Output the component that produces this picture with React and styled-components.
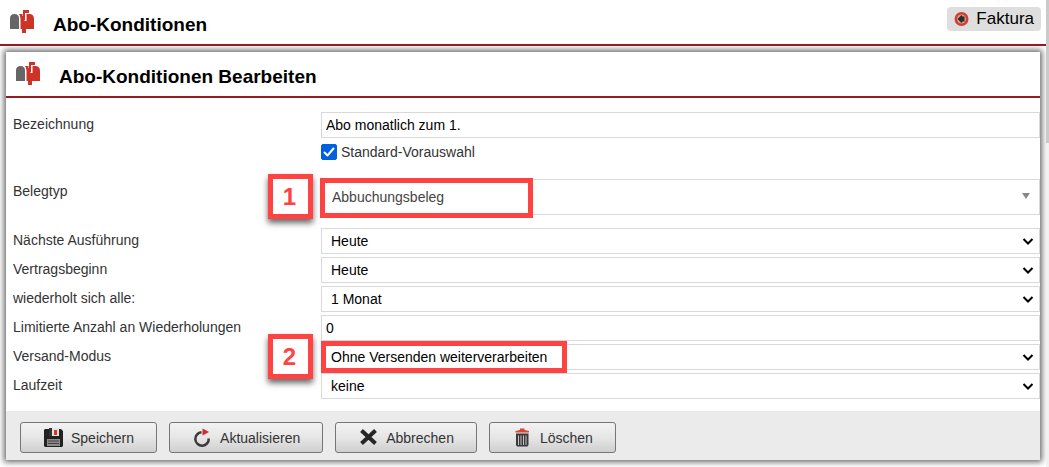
import React from "react";
import styled, { createGlobalStyle } from "styled-components";

const RED = "#921c20";
const MARK = "#ff4242";

const GlobalStyle = createGlobalStyle`
  *, *::before, *::after { box-sizing: border-box; }
  body {
    margin: 0;
    background: #fff;
    color: #333;
    font: 14px/24px "Liberation Sans", Arial, sans-serif;
  }
`;

const Page = styled.div`
  display: flex;
  min-height: 100vh;
`;

const Main = styled.main`
  flex: 1;
  min-width: 0;
`;

const ScrollTrack = styled.div`
  flex: none;
  width: 3px;
  background: #f1f1f1;
`;

const ScrollThumb = styled.div`
  height: 143px;
  background: #cacaca;
`;

const TitleBar = styled.header`
  display: flex;
  align-items: flex-start;
  gap: 19px;
  height: 46px;
  padding: 7px 5px 0 10px;
  border-bottom: 2px solid ${RED};
`;

const TitleIcon = styled.svg`
  flex: none;
  width: 24px;
  height: 28px;
`;

const Title = styled.h1`
  flex: 1;
  margin: 0;
  padding-top: 6px;
  color: #000;
  font-size: 19px;
  line-height: 24px;
`;

const ModuleLink = styled.a`
  display: flex;
  align-items: center;
  gap: 7px;
  height: 24px;
  padding: 0 7px;
  border-radius: 4px;
  background: #dedede;
  color: #000;
  font-size: 17px;
  text-decoration: none;
`;

const Panel = styled.form`
  margin: 6px 6px 7px;
  background: #fff;
  box-shadow: 0 0 6px 2px #666;
`;

const Fields = styled.div`
  display: flex;
  flex-direction: column;
  gap: 3px;
  padding: 14px 0 12px 7px;
`;

const Row = styled.div`
  display: grid;
  grid-template-columns: 308px minmax(0, 1fr);
  margin-bottom: ${(p) => (p.$spaced ? "10px" : "0")};
`;

const Control = styled.div`
  position: relative;
  display: flex;
`;

const Input = styled.input`
  width: 100%;
  height: 26px;
  padding: 0 4px;
  border: 1px solid #d9d9d9;
  border-radius: 0;
  background: #fff;
  color: #000;
  font: inherit;
`;

const Select = styled.select`
  appearance: none;
  width: 100%;
  height: ${(p) => (p.$tall ? "36px" : "26px")};
  padding: 0 24px 0 ${(p) => (p.$tall ? "10px" : "9px")};
  border: 1px solid #d9d9d9;
  border-radius: 0;
  background: #fff;
  color: ${(p) => (p.$tall ? "#444" : "#000")};
  font: inherit;
`;

const Arrow = styled.svg`
  position: absolute;
  top: calc(50% - 5px);
  right: ${(p) => (p.$tall ? "8px" : "6px")};
  width: 12px;
  height: 12px;
  pointer-events: none;
`;

const CheckLabel = styled.label`
  grid-column: 2;
  display: flex;
  align-items: center;
  gap: 4px;
  height: 35px;
  padding: 3px 0 16px;
`;

const CheckBoxWrap = styled.span`
  position: relative;
  display: flex;
`;

const CheckBox = styled.input`
  appearance: none;
  width: 16px;
  height: 16px;
  margin: 0;
  border: 1px solid #8f8f9d;
  border-radius: 2px;
  &:checked { background: #0060df; border-color: #0060df; }
  &:not(:checked) + svg { display: none; }
`;

const CheckMark = styled.svg`
  position: absolute;
  inset: 0;
  pointer-events: none;
`;

const Highlight = styled.div`
  position: absolute;
  top: ${(p) => p.$top};
  bottom: -3px;
  left: ${(p) => p.$left};
  width: ${(p) => p.$width};
  border: 5px solid ${MARK};
  pointer-events: none;
`;

const Badge = styled.div`
  position: absolute;
  top: calc(50% - 23px);
  right: calc(100% + 8px);
  display: flex;
  align-items: center;
  justify-content: center;
  width: 45px;
  height: 45px;
  padding-right: 2px;
  border: 5px solid ${MARK};
  background: #fff;
  box-shadow: 0 4px 6px rgba(0, 0, 0, 0.6);
  color: ${MARK};
  font-size: 24px;
  font-weight: bold;
`;

const Footer = styled.footer`
  display: flex;
  flex-wrap: wrap;
  gap: 12px;
  padding: 11px 14px 7px;
  background: #ebebeb;
`;

const Button = styled.button`
  display: flex;
  align-items: center;
  gap: 6px;
  height: 31px;
  padding: 0 22px;
  border: 1px solid #767676;
  border-radius: 3px;
  background: linear-gradient(#f2f2f2, #e6e6e6 50%, #cfcfcf);
  color: #333;
  font: inherit;
`;

const ButtonIcon = styled.svg`
  flex: none;
  width: 22px;
  height: 20px;
`;

function Mailbox() {
  return (
    <TitleIcon viewBox="0 0 24 28" aria-hidden="true">
      <path d="M0 22V11.500Q0 7 4.500 7Q9 7 9 11.500V22Z" fill="#666" />
      <path d="M9 7H20Q24 7.500 24 12V22H16V26H12V22H10.500V12Q10.500 9 9 7Z" fill="#cb3426" />
      <path d="M12.500 6H16.500V14H14.500V9H12.500Z" fill="#fff" />
      <path d="M13 3H19V6H15V13H13Z" fill="#cb3426" />
    </TitleIcon>
  );
}

function SelectField({ id, value, tall, children }) {
  return (
    <Control>
      <Select id={id} $tall={tall} defaultValue={value}>
        <option>{value}</option>
      </Select>
      <Arrow $tall={tall} viewBox="0 0 12 12" aria-hidden="true">
        {tall ? (
          <path d="M2 1H10L6 7Z" fill="#888" />
        ) : (
          <path d="M1.500 3L6 7.500L10.500 3" fill="none" stroke="#000" strokeWidth="2" />
        )}
      </Arrow>
      {children}
    </Control>
  );
}

export default function App() {
  return (
    <Page>
      <GlobalStyle />
      <Main>
        <TitleBar>
          <Mailbox />
          <Title>Abo-Konditionen</Title>
          <ModuleLink href="#faktura">
            <svg width="15" height="16" viewBox="0 0 15 16" aria-hidden="true">
              <circle cx="7.500" cy="8" r="7" fill="#d63c2e" />
              <circle cx="7.500" cy="8" r="4.500" fill="#c9a5a0" />
              <path d="M3.500 8L7.500 4L8.500 5.500H10.500V10.500H8.500L7.500 12Z" fill="#2b2b30" />
            </svg>
            Faktura
          </ModuleLink>
        </TitleBar>

        <Panel onSubmit={(e) => e.preventDefault()}>
          <TitleBar>
            <Mailbox />
            <Title as="h2">Abo-Konditionen Bearbeiten</Title>
          </TitleBar>

          <Fields>
            <Row>
              <label htmlFor="bezeichnung">Bezeichnung</label>
              <Control>
                <Input id="bezeichnung" type="text" defaultValue="Abo monatlich zum 1." />
              </Control>
            </Row>
            <Row>
              <CheckLabel>
                <CheckBoxWrap>
                  <CheckBox type="checkbox" defaultChecked />
                  <CheckMark width="16" height="16" viewBox="0 0 16 16" aria-hidden="true">
                    <path d="M3.500 8.500L6.500 11.500L12.500 4.500" fill="none" stroke="#fff" strokeWidth="2" strokeLinecap="round" strokeLinejoin="round" />
                  </CheckMark>
                </CheckBoxWrap>
                Standard-Vorauswahl
              </CheckLabel>
            </Row>
            <Row $spaced>
              <label htmlFor="belegtyp">Belegtyp</label>
              <SelectField id="belegtyp" value="Abbuchungsbeleg" tall>
                <Highlight $top="-1px" $left="-1px" $width="213px" />
                <Badge>1</Badge>
              </SelectField>
            </Row>
            <Row>
              <label htmlFor="ausfuehrung">Nächste Ausführung</label>
              <SelectField id="ausfuehrung" value="Heute" />
            </Row>
            <Row>
              <label htmlFor="beginn">Vertragsbeginn</label>
              <SelectField id="beginn" value="Heute" />
            </Row>
            <Row>
              <label htmlFor="intervall">wiederholt sich alle:</label>
              <SelectField id="intervall" value="1 Monat" />
            </Row>
            <Row>
              <label htmlFor="anzahl">Limitierte Anzahl an Wiederholungen</label>
              <Control>
                <Input id="anzahl" type="text" defaultValue="0" />
              </Control>
            </Row>
            <Row>
              <label htmlFor="versand">Versand-Modus</label>
              <SelectField id="versand" value="Ohne Versenden weiterverarbeiten">
                <Highlight $top="-3px" $left="0" $width="246px" />
                <Badge>2</Badge>
              </SelectField>
            </Row>
            <Row>
              <label htmlFor="laufzeit">Laufzeit</label>
              <SelectField id="laufzeit" value="keine" />
            </Row>
          </Fields>

          <Footer>
            <Button type="submit">
              <ButtonIcon viewBox="0 0 22 20" aria-hidden="true">
                <path d="M2 1H18L20 3V18L19 19H2L1 18V2Z" fill="#222" />
                <path d="M6 0H16V8H6Z" fill="#e4e4e4" />
                <path d="M6 0H9V8H6Z" fill="#333" />
                <path d="M11 2H14V7H11Z" fill="#d8352a" />
                <path d="M4 11H17V18H4Z" fill="#8c8c8c" />
                <path d="M5 13H16M5 15.500H16" stroke="#444" />
              </ButtonIcon>
              Speichern
            </Button>
            <Button type="button">
              <ButtonIcon viewBox="0 0 22 20" aria-hidden="true">
                <path d="M9.500 4.300A6.700 6.700 0 1 0 16.700 10.500" fill="none" stroke="#3a3a3a" strokeWidth="2.500" />
                <path d="M10.500 0.500L17 4L10.500 7.500Z" fill="#d8252a" />
              </ButtonIcon>
              Aktualisieren
            </Button>
            <Button type="button">
              <ButtonIcon viewBox="0 0 22 20" aria-hidden="true">
                <path d="M3.500 2.500L17.500 15.500M17.500 2.500L3.500 15.500" stroke="#262626" strokeWidth="4" />
              </ButtonIcon>
              Abbrechen
            </Button>
            <Button type="button">
              <ButtonIcon viewBox="0 0 22 20" aria-hidden="true">
                <path d="M3.500 4.500V3L8 2V0.500H12.500V2L17 3V4.500Z" fill="#dc4436" />
                <path d="M4 5.500H16.500V17L15.500 18.500H5L4 17Z" fill="#3a3a3a" />
                <path d="M6.500 7.500V17M9 7.500V17M11.500 7.500V17M14 7.500V17" stroke="#c4c4c4" />
              </ButtonIcon>
              Löschen
            </Button>
          </Footer>
        </Panel>
      </Main>
      <ScrollTrack>
        <ScrollThumb />
      </ScrollTrack>
    </Page>
  );
}
